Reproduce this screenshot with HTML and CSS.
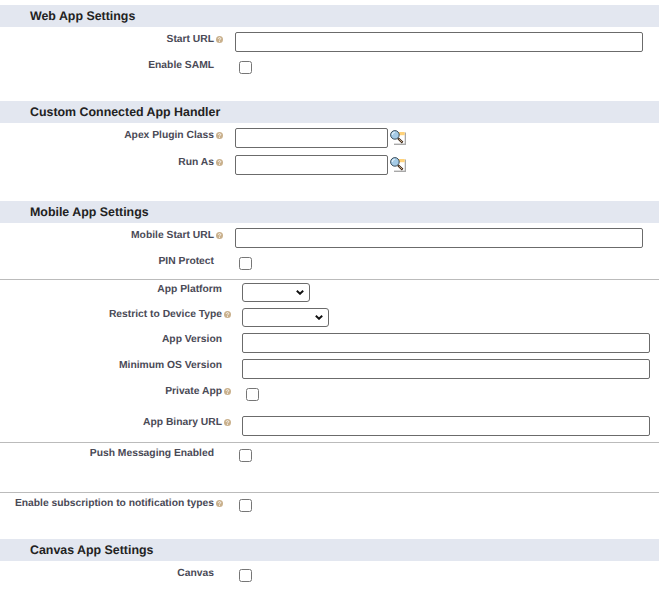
FILE: index.html
```html
<!DOCTYPE html>
<html lang="en">
<head>
    <meta charset="UTF-8">
    <meta name="viewport" content="width=device-width, initial-scale=1.0">
    <title>Connected App Settings</title>
    <link rel="stylesheet" href="styles.css">
</head>
<body>
    <svg class="defs" width="0" height="0">
        <symbol id="help" viewBox="0 0 7 7">
            <circle cx="3.5" cy="3.5" r="3.5" fill="#c9b08c"/>
            <path d="M2.3 2.7C2.3 1.3 4.8 1.4 4.7 2.7 4.7 3.5 3.5 3.4 3.5 4.4" fill="none" stroke="#fff" stroke-width="0.9"/>
            <rect x="3.05" y="4.9" width="0.9" height="0.9" fill="#fff"/>
        </symbol>
        <symbol id="lookup" viewBox="0 0 16 16">
            <rect x="4" y="2.5" width="12" height="12.5" fill="#a8a8a8"/>
            <rect x="3.5" y="2" width="11.2" height="11.6" fill="#fff"/>
            <rect x="8.5" y="2" width="6.2" height="3.2" fill="#ffd27a"/>
            <path d="M8 8.2l4.6 4.4" stroke="#3a2210" stroke-width="2.2"/>
            <path d="M8.8 9l3.2 3" stroke="#e9d3b0" stroke-width="0.8"/>
            <circle cx="4.9" cy="4.9" r="4.3" fill="#a5cbe6" stroke="#2a3c48" stroke-width="0.9"/>
            <path d="M2.3 4.9a2.6 2.6 0 0 1 2.6-2.6" fill="none" stroke="#e4f2fb" stroke-width="1.1"/>
        </symbol>
    </svg>

    <section class="section section-web">
        <h3 class="section-head">Web App Settings</h3>
        <div class="row">
            <label class="field-label">Start URL<svg class="help"><use href="#help"/></svg></label>
            <input class="text-input" type="text">
        </div>
        <div class="row row-check">
            <label class="field-label no-help">Enable SAML</label>
            <input class="check" type="checkbox">
        </div>
    </section>

    <section class="section section-handler">
        <h3 class="section-head">Custom Connected App Handler</h3>
        <div class="row">
            <label class="field-label">Apex Plugin Class<svg class="help"><use href="#help"/></svg></label>
            <div class="lookup-field">
                <input class="text-input short" type="text">
                <svg class="lookup"><use href="#lookup"/></svg>
            </div>
        </div>
        <div class="row row-run">
            <label class="field-label">Run As<svg class="help"><use href="#help"/></svg></label>
            <div class="lookup-field">
                <input class="text-input short" type="text">
                <svg class="lookup"><use href="#lookup"/></svg>
            </div>
        </div>
    </section>

    <section class="section section-mobile">
        <h3 class="section-head">Mobile App Settings</h3>
        <div class="row">
            <label class="field-label">Mobile Start URL<svg class="help"><use href="#help"/></svg></label>
            <input class="text-input" type="text">
        </div>
        <div class="row row-check">
            <label class="field-label no-help">PIN Protect</label>
            <input class="check" type="checkbox">
        </div>
    </section>

    <div class="group group-platform">
        <div class="row row-inner">
            <label class="field-label no-help">App Platform</label>
            <select class="select-input small"></select>
        </div>
        <div class="row row-inner">
            <label class="field-label">Restrict to Device Type<svg class="help"><use href="#help"/></svg></label>
            <select class="select-input"></select>
        </div>
        <div class="row row-inner">
            <label class="field-label no-help">App Version</label>
            <input class="text-input" type="text">
        </div>
        <div class="row row-inner">
            <label class="field-label no-help">Minimum OS Version</label>
            <input class="text-input" type="text">
        </div>
        <div class="row row-inner row-private">
            <label class="field-label">Private App<svg class="help"><use href="#help"/></svg></label>
            <input class="check" type="checkbox">
        </div>
        <div class="row row-inner">
            <label class="field-label">App Binary URL<svg class="help"><use href="#help"/></svg></label>
            <input class="text-input" type="text">
        </div>
    </div>

    <div class="group group-push">
        <div class="row row-check">
            <label class="field-label no-help">Push Messaging Enabled</label>
            <input class="check" type="checkbox">
        </div>
    </div>

    <div class="group group-notify">
        <div class="row row-check">
            <label class="field-label">Enable subscription to notification types<svg class="help"><use href="#help"/></svg></label>
            <input class="check" type="checkbox">
        </div>
    </div>

    <section class="section">
        <h3 class="section-head">Canvas App Settings</h3>
        <div class="row row-canvas">
            <label class="field-label no-help">Canvas</label>
            <input class="check" type="checkbox">
        </div>
    </section>
</body>
</html>
```

FILE: styles.css
```css
/* Page */
body {
    margin: 0;
    padding-top: 5px;
    background-color: #fff;
    font-family: "Liberation Sans", Arial, sans-serif;
    text-rendering: geometricPrecision;
}

.defs {
    display: block;
    height: 0;
}

/* Blue section headers */
.section-head {
    margin: 0;
    height: 22px;
    padding-left: 30px;
    background-color: #e3e7f0;
    color: #222;
    font-size: 12.4px;
    font-weight: bold;
    line-height: 22px;
}

.section-web {
    padding-bottom: 27px;
}

.section-handler {
    padding-bottom: 26px;
}

.section-mobile {
    padding-bottom: 9px;
}

/* Groups split by a grey line */
.group {
    border-top: 1px solid #bbb;
}

.group-platform {
    padding-top: 2px;
    padding-bottom: 6px;
}

.group-push {
    padding-top: 3px;
    padding-bottom: 30px;
}

.group-notify {
    padding-top: 3px;
    padding-bottom: 27px;
}

/* Form rows: label column, then the control */
.row {
    display: grid;
    grid-template-columns: 223px 1fr;
    column-gap: 12px;
    align-items: start;
    padding-top: 5px;
}

.row-check {
    padding-top: 6px;
}

.row-run {
    padding-top: 7px;
}

.row-canvas {
    padding-top: 5px;
}

.group > .row:first-child {
    padding-top: 0;
}

.row-inner {
    grid-template-columns: 231px 1fr;
    column-gap: 11px;
}

.row-private {
    padding-bottom: 9px;
}

.field-label {
    display: flex;
    justify-content: flex-end;
    align-items: center;
    height: 15px;
    color: #4a4a56;
    font-size: 10.3px;
    font-weight: bold;
    line-height: 15px;
    white-space: nowrap;
}

.no-help {
    padding-right: 9px;
}

.help {
    width: 7px;
    height: 7px;
    margin-left: 2px;
}

/* Controls */
.text-input {
    box-sizing: border-box;
    display: block;
    width: 408px;
    height: 20px;
    margin: 0;
    border: 1px solid #6b6b6b;
    border-radius: 2px;
    background-color: #fff;
}

.text-input.short {
    width: 153px;
}

.row-inner .text-input {
    margin-top: 1px;
}

.check {
    display: block;
    width: 13px;
    height: 13px;
    margin: 3px 0 0 4px;
}

.row-private .check {
    margin-top: 4px;
}

.select-input {
    appearance: none;
    display: block;
    box-sizing: border-box;
    width: 87px;
    height: 19px;
    margin: 1px 0 0;
    border: 1px solid #6b6b6b;
    border-radius: 3px;
    background: #fff url("data:image/svg+xml,%3Csvg xmlns='http://www.w3.org/2000/svg' width='8' height='5'%3E%3Cpath d='M.8.8 4 3.8 7.2.8' fill='none' stroke='%23111' stroke-width='1.9'/%3E%3C/svg%3E") no-repeat right 5px center;
}

.select-input.small {
    width: 68px;
}

.lookup-field {
    display: flex;
    align-items: flex-start;
    gap: 2px;
}

.lookup {
    width: 16px;
    height: 16px;
    margin-top: 2px;
}
```
